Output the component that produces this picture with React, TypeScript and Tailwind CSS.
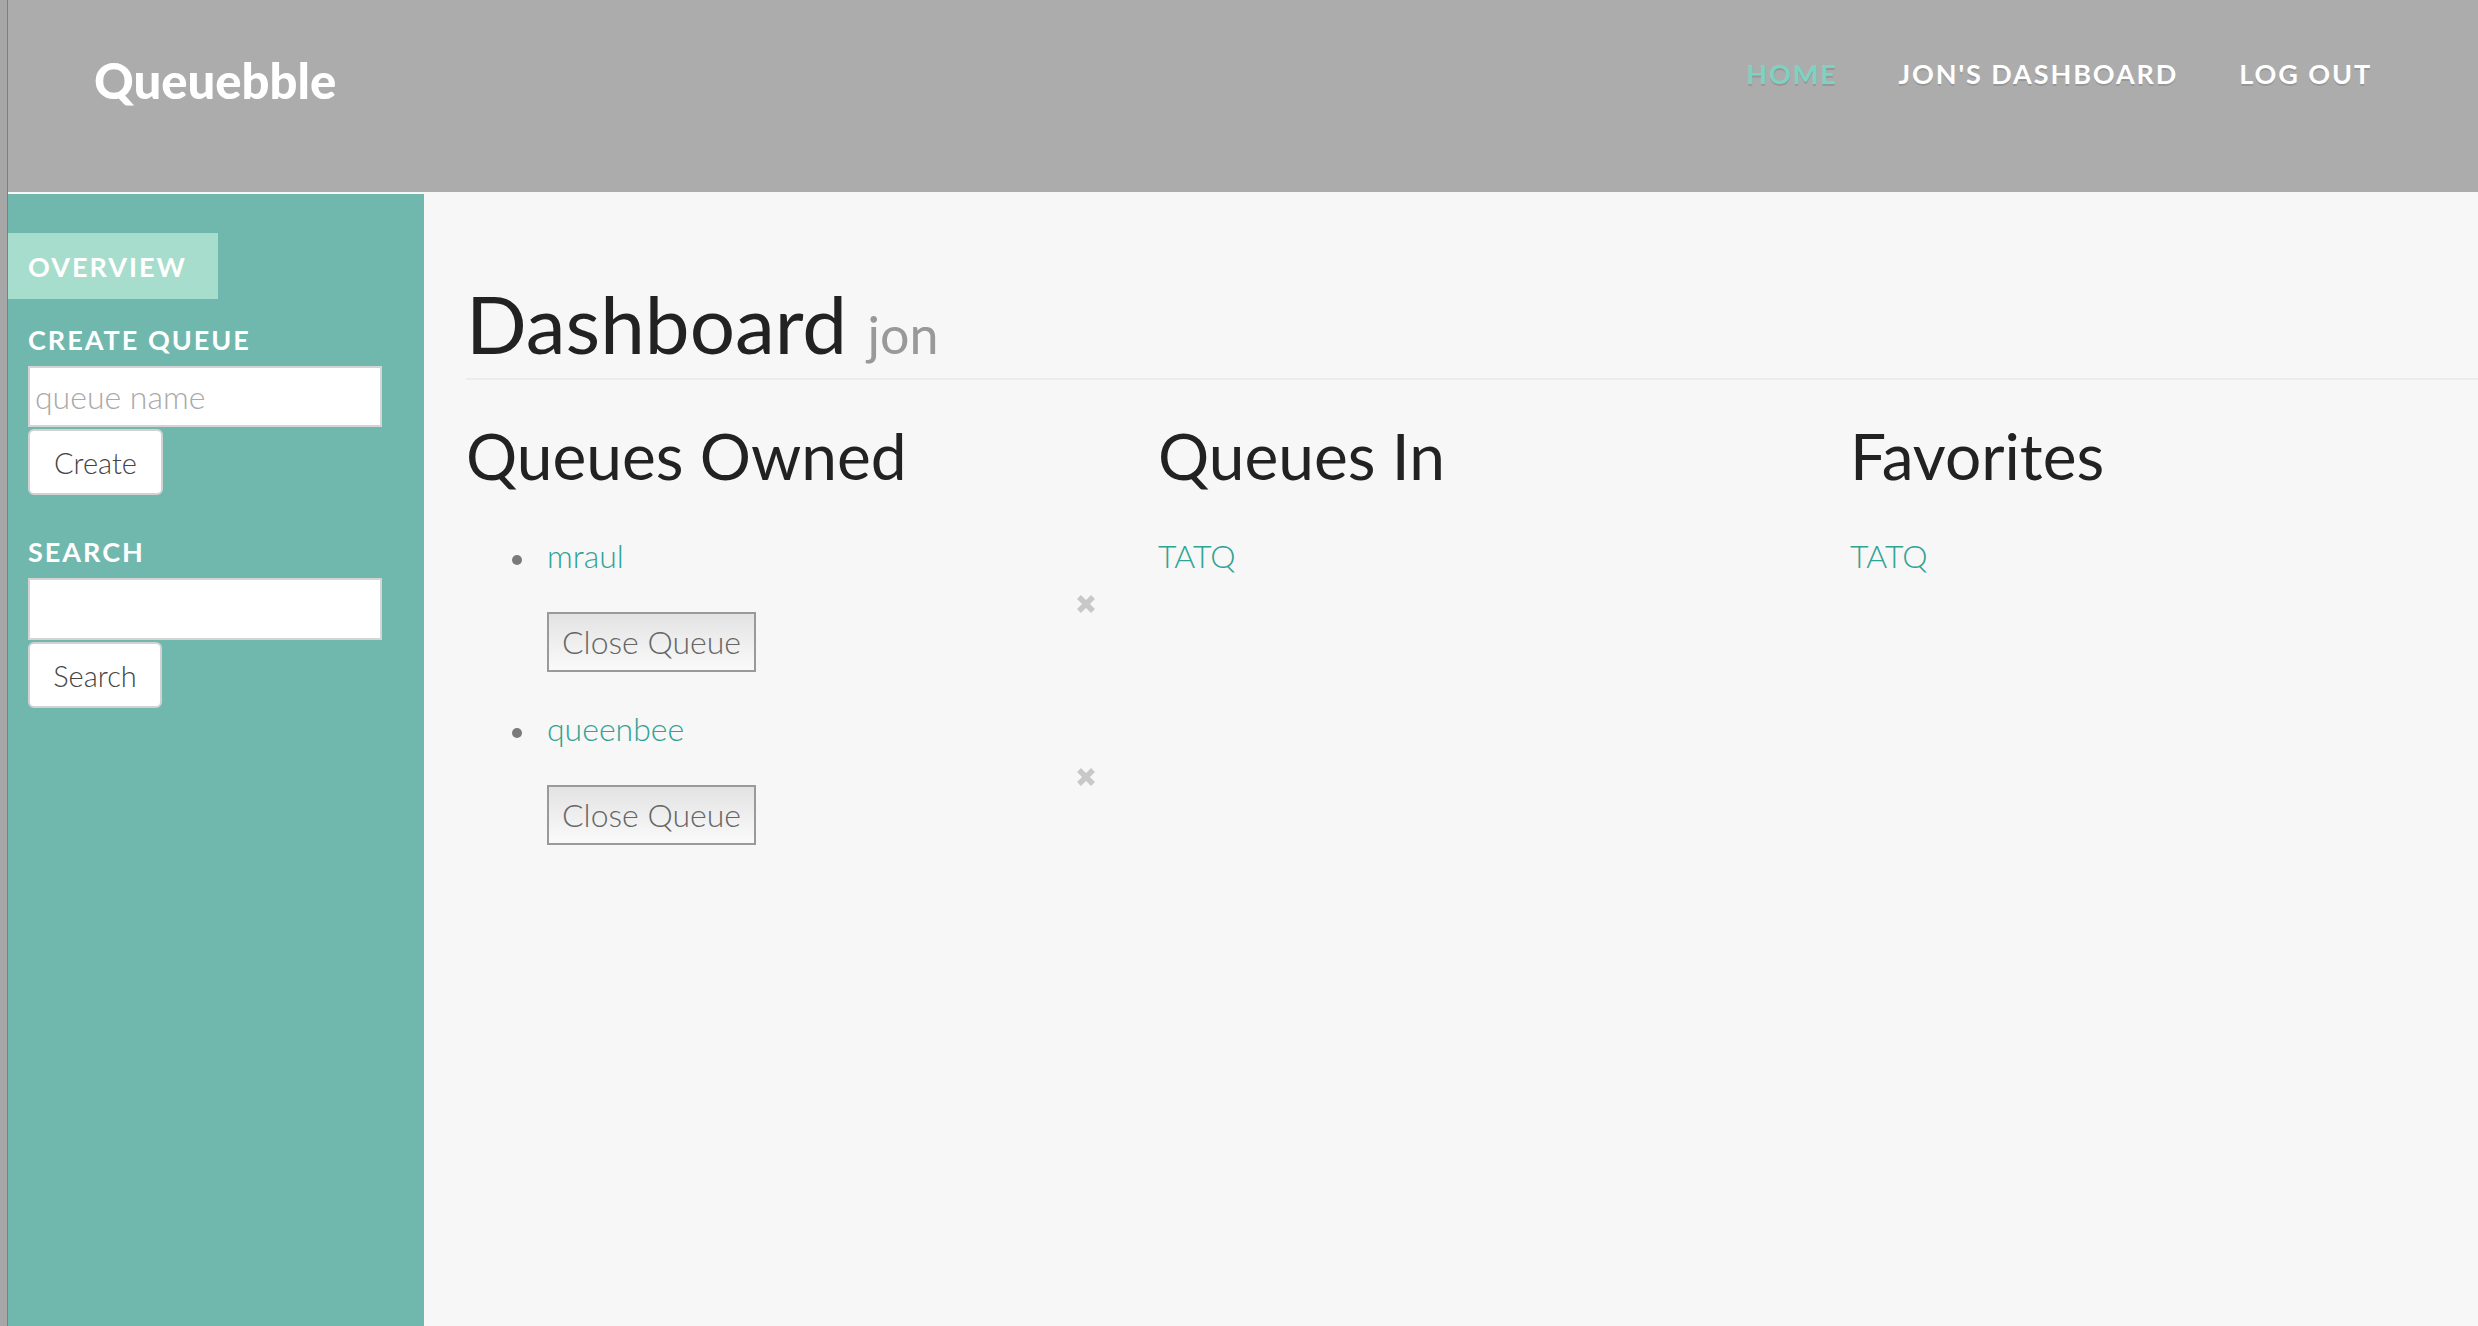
import React from "react";

function CloseX({ className = "" }: { className?: string }) {
  return (
    <svg className={className} width="20" height="20" viewBox="0 0 20 20" aria-hidden="true">
      <path d="M3 3 L17 17 M17 3 L3 17" stroke="#c8c8c8" strokeWidth="5.5" strokeLinecap="butt" />
    </svg>
  );
}

function OwnedItem({ name }: { name: string }) {
  return (
    <li className="relative mb-[41px]">
      <span className="absolute left-[-35px] top-[15px] h-[10px] w-[10px] rounded-full bg-[#7a7a7a]" />
      <a className="block text-[32px] font-light leading-none text-[#2fa394]" href="#">
        {name}
      </a>
      <button className="mt-[40px] block h-[60px] w-[209px] border-2 border-[#9a9a9a] bg-gradient-to-b from-[#e3e3e3] to-[#fafafa] text-[32px] font-light leading-none text-[#666]">
        Close Queue
      </button>
      <CloseX className="absolute left-[529px] top-[54px]" />
    </li>
  );
}

export default function App() {
  return (
    <div className="flex h-screen w-full overflow-hidden bg-[#f7f7f7] font-['Lato','Liberation_Sans',sans-serif]">
      <div className="w-[8px] shrink-0 border-r border-[#7e7e7e] bg-[#a7a7a7]" />
      <div className="flex min-w-0 flex-1 flex-col">
        <header className="flex h-[192px] shrink-0 items-start justify-between bg-[#acacac] pl-[86px] pr-[106px]">
          <div className="pt-[56px] text-[49px] font-black leading-none text-white">Queuebble</div>
          <nav className="flex gap-[61px] pt-[60px] text-[27px] font-bold leading-none tracking-[1.9px] [text-shadow:0_2px_0_rgba(0,0,0,0.12)]">
            <a href="#" className="text-[#7dd3c2]">HOME</a>
            <a href="#" className="text-white">JON'S DASHBOARD</a>
            <a href="#" className="text-white">LOG OUT</a>
          </nav>
        </header>
        <div className="flex min-h-0 flex-1 pt-[2px]">
          <aside className="w-[416px] shrink-0 bg-[#70b8ae] pt-[39px]">
            <div className="flex h-[66px] w-[210px] items-center bg-[#a6ddcc] pl-[20px] text-[27px] font-bold leading-none tracking-[2px] text-white">
              OVERVIEW
            </div>
            <div className="px-[20px]">
              <h3 className="mt-[27px] text-[27px] font-bold leading-none tracking-[2px] text-white">CREATE QUEUE</h3>
              <input
                placeholder="queue name"
                className="mt-[13px] block h-[61px] w-[354px] border-2 border-[#d4d4d4] bg-white px-[5px] text-[32px] font-light text-[#333] outline-none placeholder:text-[#a9a9a9]"
              />
              <button className="mt-[2px] block h-[66px] w-[135px] rounded-[6px] border-2 border-[#d2d2d2] bg-white text-[29px] font-light leading-none text-[#444]">
                Create
              </button>
              <h3 className="mt-[43px] text-[27px] font-bold leading-none tracking-[2px] text-white">SEARCH</h3>
              <input className="mt-[13px] block h-[62px] w-[354px] border-2 border-[#d4d4d4] bg-white px-[5px] text-[32px] font-light text-[#333] outline-none" />
              <button className="mt-[2px] block h-[66px] w-[134px] rounded-[6px] border-2 border-[#d2d2d2] bg-white text-[29px] font-light leading-none text-[#444]">
                Search
              </button>
            </div>
          </aside>
          <main className="min-w-0 flex-1 pl-[42px]">
            <h1 className="mt-[89px] text-[80px] font-normal leading-none text-[#222]">
              Dashboard <small className="text-[52px] text-[#999]">jon</small>
            </h1>
            <div className="mt-[15px] h-[2px] bg-[#ebebeb]" />
            <div className="mt-[44px] flex">
              <section className="w-[692px] shrink-0">
                <h2 className="text-[64px] font-normal leading-none text-[#222]">Queues Owned</h2>
                <ul className="mt-[52px] pl-[81px]">
                  <OwnedItem name="mraul" />
                  <OwnedItem name="queenbee" />
                </ul>
              </section>
              <section className="w-[692px] shrink-0">
                <h2 className="text-[64px] font-normal leading-none text-[#222]">Queues In</h2>
                <a href="#" className="mt-[52px] block text-[32px] font-light leading-none text-[#2fa394]">TATQ</a>
              </section>
              <section className="w-[692px] shrink-0">
                <h2 className="text-[64px] font-normal leading-none text-[#222]">Favorites</h2>
                <a href="#" className="mt-[52px] block text-[32px] font-light leading-none text-[#2fa394]">TATQ</a>
              </section>
            </div>
          </main>
        </div>
      </div>
    </div>
  );
}
